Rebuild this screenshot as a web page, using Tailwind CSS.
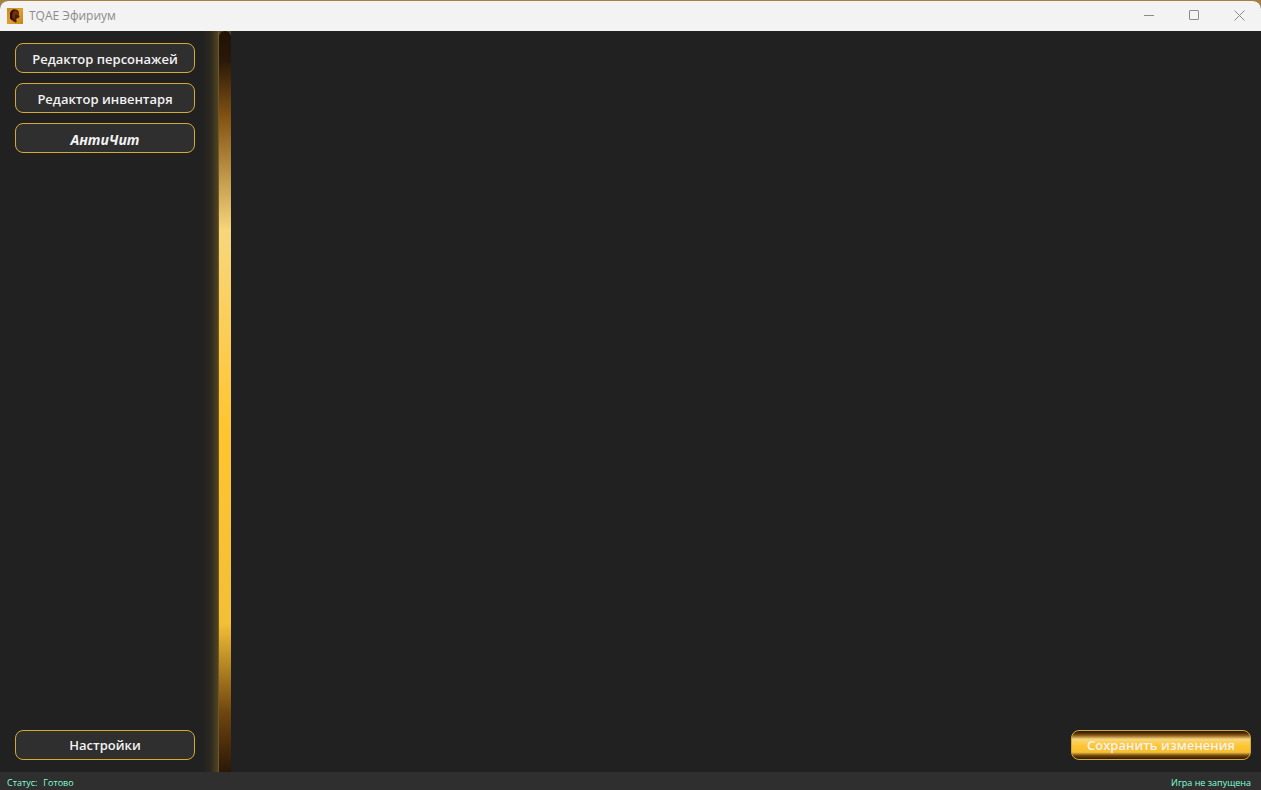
<!DOCTYPE html>
<html lang="ru">
<head>
    <meta charset="UTF-8">
    <meta name="viewport" content="width=device-width, initial-scale=1.0">
    <title>TQAE Эфириум</title>
    <script src="https://cdn.jsdelivr.net/npm/@tailwindcss/browser@4"></script>
</head>
<body class="h-screen bg-[#a87f3e] pt-px font-['Open_Sans','Noto_Sans',sans-serif] overflow-hidden">
    <div class="h-full flex flex-col bg-[#212121] rounded-t-lg overflow-hidden">
        <!-- Заголовок окна -->
        <header class="h-[30px] shrink-0 flex items-center bg-[#f3f3f3] text-[#8c8c8c]">
            <svg class="w-4 h-4 ml-[7px] mb-px" viewBox="0 0 16 16">
                <defs>
                    <linearGradient id="gold" x1="0" y1="0" x2="1" y2="1">
                        <stop offset="0" stop-color="#c98a1c"/>
                        <stop offset="0.5" stop-color="#dda032"/>
                        <stop offset="1" stop-color="#c48418"/>
                    </linearGradient>
                </defs>
                <rect width="16" height="16" fill="url(#gold)"/>
                <path d="M3 7C3 3.500 5 1.500 8 1.500C10.500 1.500 12 3 12 5.500L11.500 7L13 8.500L11.500 9L12 10.500L10.500 10L9.500 11L9 12L10 13L9 14.500L6.500 13.500L4.500 12L3 10.500Z" fill="#4a1c08"/>
                <path d="M6 3.500C8 2.500 10.500 3 11.500 5L11 6.500L8 7L8 11L5.500 9Z" fill="#74300c"/>
                <path d="M3 7C3 3.500 5 1.500 8 1.500L6 3.500C5 5 4.500 7 5 12L3 10.500Z" fill="#2a0d05"/>
            </svg>
            <h1 class="ml-[6px] text-xs">TQAE Эфириум</h1>
            <div class="ml-auto flex h-full">
                <button aria-label="Свернуть" class="w-[45px] flex items-center justify-center">
                    <svg class="w-[11px] h-[11px] mb-px" viewBox="0 0 11 11" fill="none" stroke="currentColor"><path d="M1 5.500H11"/></svg>
                </button>
                <button aria-label="Развернуть" class="w-[46px] flex items-center justify-center">
                    <svg class="w-[11px] h-[11px] mb-px" viewBox="0 0 11 11" fill="none" stroke="currentColor"><rect x=".5" y=".5" width="9" height="9" rx=".5"/></svg>
                </button>
                <button aria-label="Закрыть" class="w-[44px] flex items-center justify-center">
                    <svg class="w-[11px] h-[11px] mb-px" viewBox="0 0 11 11" fill="none" stroke="currentColor"><path d="M.5 .5L10.500 10.500M10.500 .5L.5 10.500"/></svg>
                </button>
            </div>
        </header>

        <div class="flex-1 flex min-h-0">
            <!-- Боковое меню -->
            <nav class="w-[218px] shrink-0 flex flex-col gap-[10px] pl-[15px] pr-[23px] py-3 text-[13px] font-semibold text-[#f2f2f2]">
                <button class="h-[30px] pt-[3px] rounded-lg border border-[#d4aa30] bg-[#2f2f2f] whitespace-nowrap">Редактор персонажей</button>
                <button class="h-[30px] pt-[3px] rounded-lg border border-[#d4aa30] bg-[#2f2f2f] whitespace-nowrap">Редактор инвентаря</button>
                <button class="h-[30px] pt-[3px] rounded-lg border border-[#d4aa30] bg-[#2f2f2f] whitespace-nowrap text-sm font-bold italic">АнтиЧит</button>
                <button class="h-[30px] pt-[2px] mt-auto rounded-lg border border-[#d4aa30] bg-[#2f2f2f] whitespace-nowrap">Настройки</button>
            </nav>

            <!-- Золотая колонна со свечением слева -->
            <div class="-ml-4 w-4 shrink-0 bg-linear-to-r from-[#212121] via-[#2b2820] to-[#51431f]"></div>
            <div class="w-[13px] shrink-0 border-l border-[#6b5830] bg-[#51431f]">
                <div class="h-full rounded-t-md bg-[linear-gradient(to_bottom,#1f1206_0%,#2a1808_4%,#865614_12%,#f7d67c_27%,#ffc52f_54%,#f3bf36_80%,#6f450f_92%,#2a1808_100%)]"></div>
            </div>

            <main class="flex-1 flex items-end justify-end pr-[10px] pb-3">
                <button class="w-[180px] h-[30px] pt-[2px] rounded-lg border border-[#d4aa30] bg-[linear-gradient(to_bottom,#2a1808_0%,#4a2c0a_7%,#865614_15%,#f7d67c_29%,#ffc52f_54%,#f3bf36_76%,#6f450f_88%,#2a1808_100%)] text-[13px] font-semibold text-[#f2f2f2] whitespace-nowrap">Сохранить изменения</button>
            </main>
        </div>

        <!-- Строка состояния -->
        <footer class="h-[18px] shrink-0 flex items-center justify-between pl-[7px] pr-[10px] pt-[3px] bg-[#2f2f2f] text-[9px] font-medium leading-none text-[#7fffd4]">
            <p class="flex gap-[6px]"><span>Статус:</span><span>Готово</span></p>
            <p>Игра не запущена</p>
        </footer>
    </div>
</body>
</html>
